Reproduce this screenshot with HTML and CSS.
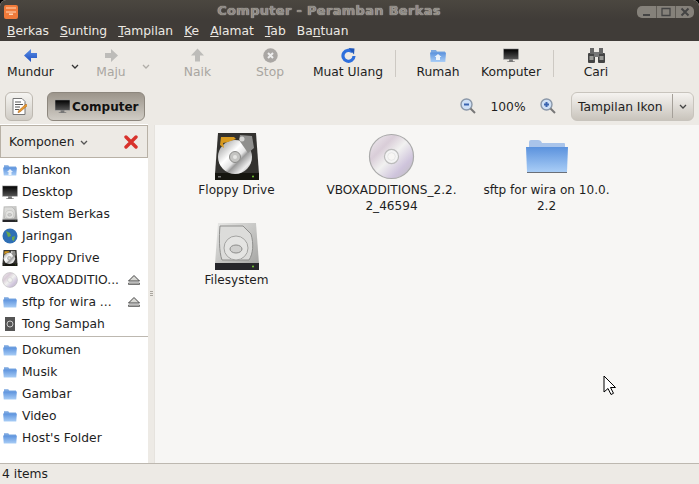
FILE: index.html
```html
<!DOCTYPE html>
<html lang="id">
<head>
    <meta charset="UTF-8">
    <title>Computer - Peramban Berkas</title>
    <link rel="stylesheet" href="styles.css">
</head>
<body>
<svg class="defs" width="0" height="0">
    <defs>
        <linearGradient id="fold" x1="0" y1="0" x2="0" y2="1"><stop offset="0" stop-color="#5b92dd"/><stop offset="1" stop-color="#a9cdf6"/></linearGradient>
        <linearGradient id="screen" x1="0" y1="0" x2="0" y2="1"><stop offset="0" stop-color="#000"/><stop offset="1" stop-color="#555"/></linearGradient>
        <linearGradient id="hddsilver" x1="0" y1="0" x2="1" y2="1"><stop offset="0" stop-color="#e8e8e6"/><stop offset="1" stop-color="#a5a5a3"/></linearGradient>
        <linearGradient id="platter" x1="0" y1="0" x2="1" y2="1"><stop offset="0" stop-color="#8a8a8a"/><stop offset=".4" stop-color="#fff"/><stop offset=".55" stop-color="#e4e4e4"/><stop offset=".62" stop-color="#9a9a9a"/><stop offset=".8" stop-color="#eee"/><stop offset="1" stop-color="#777"/></linearGradient>
        <linearGradient id="cd" x1="0" y1="0" x2="1" y2="1"><stop offset="0" stop-color="#f2f0f2"/><stop offset=".3" stop-color="#d9cdd8"/><stop offset=".5" stop-color="#f1f1f0"/><stop offset=".75" stop-color="#cfc4dc"/><stop offset="1" stop-color="#bbb"/></linearGradient>
        <linearGradient id="backblue" x1="0" y1="0" x2="0" y2="1"><stop offset="0" stop-color="#5a8fe6"/><stop offset="1" stop-color="#1f4fc0"/></linearGradient>
        <symbol id="folder" viewBox="0 0 16 14">
            <path d="M1 1.500h5l1 1.500h8v2H1z" fill="#7ba7e0"/>
            <path d="M0 4h16l-.7 9.500H.7z" fill="url(#fold)"/>
        </symbol>
        <symbol id="folder-large" viewBox="0 0 42 33">
            <path d="M3 2q0-2 2-2h7q3 0 4 3h22q1 0 1 1v4H3z" fill="#a9c4ea"/>
            <path d="M0 7h42l-1 25H1z" fill="url(#fold)"/>
            <path d="M1 32h40v1H1z" fill="#6a6f78"/>
        </symbol>
        <symbol id="disk" viewBox="0 0 16 16">
            <circle cx="8" cy="8" r="7.500" fill="url(#cd)" stroke="#aaa" stroke-width=".4"/>
            <circle cx="8" cy="8" r="2.400" fill="#f4f4f4" stroke="#bbb" stroke-width=".4"/>
            <circle cx="8" cy="8" r="1.300" fill="#f7f6f4" stroke="#ddd" stroke-width=".2"/>
        </symbol>
        <symbol id="eject" viewBox="0 0 12 10">
            <path d="M6 .5 11.500 6h-11z" fill="#d8d8d4" stroke="#444"/>
            <path d="M.5 8h11v1.500H.5z" fill="#d8d8d4" stroke="#444" stroke-width=".7"/>
        </symbol>
        <symbol id="monitor" viewBox="0 0 16 16">
            <rect x="0" y="1" width="16" height="11" fill="url(#screen)" stroke="#aaa" stroke-width=".6"/>
            <path d="M6 12h4v2h2v1H4v-1h2z" fill="#777"/>
        </symbol>
        <symbol id="chevron" viewBox="0 0 8 5">
            <path d="M1 1l3 3 3-3" fill="none" stroke="currentColor" stroke-width="1.300"/>
        </symbol>
        <symbol id="hdd-dark" viewBox="0 0 44 47">
            <path d="M3 0h38l3 41H0z" fill="#33322f"/>
            <rect x="0" y="40" width="44" height="7" fill="#15150f"/>
            <circle cx="20" cy="24" r="17" fill="url(#platter)"/>
            <circle cx="20" cy="24" r="5.500" fill="#c4c4c2" stroke="#8c8c8a"/>
            <circle cx="20" cy="24" r="2" fill="#e6e6e4"/>
            <path d="M6 4h13l2 2-8 3-5 1 1 5-4-3z" fill="#d89a1f"/>
            <path d="M25 2l12 1 2 12-6 5-9-13z" fill="#8f8f8d"/>
            <circle cx="27" cy="6" r="2.500" fill="#d5d5d3"/>
            <rect x="3" y="43" width="3" height="1.500" fill="#777"/>
            <circle cx="38" cy="43.500" r="1" fill="#7c3"/>
        </symbol>
        <symbol id="hdd-light" viewBox="0 0 44 47">
            <path d="M3 0h38l3 41H0z" fill="url(#hddsilver)"/>
            <rect x="0" y="40" width="44" height="7" fill="#26262a"/>
            <path d="M5 3h23l8 8c3 10 2 20-2 26H7c-3-8-3-24-2-34z" fill="#dcdcda" stroke="#8f8f8d"/>
            <circle cx="21" cy="25" r="12" fill="#e4e4e2" stroke="#a3a3a1"/>
            <ellipse cx="21" cy="26" rx="6" ry="4" fill="#cfcfcd" stroke="#8c8c8a"/>
            <circle cx="38" cy="43.500" r="1" fill="#7c3"/>
        </symbol>
    </defs>
</svg>

<div class="window">
    <div class="titlebar">
        <svg class="app-icon" width="14" height="14" viewBox="0 0 14 14"><rect width="14" height="14" rx="2" fill="#ef7a3a"/><path d="M2 3h10M2 7h10" stroke="#ffd5b5"/><rect x="5" y="8.500" width="4" height="1.500" fill="#ffd5b5"/></svg>
        <span class="title">Computer - Peramban Berkas</span>
        <div class="win-btns">
            <span class="win-btn"><svg width="10" height="10" viewBox="0 0 10 10"><path d="M1 8h7" stroke="#444" stroke-width="2"/></svg></span>
            <span class="win-btn"><svg width="10" height="10" viewBox="0 0 10 10"><path d="M1 1.500h8v7H1z" fill="none" stroke="#444" stroke-width="1.300"/></svg></span>
            <span class="win-btn"><svg width="10" height="10" viewBox="0 0 10 10"><path d="M1.500 1.500l7 7m0-7l-7 7" stroke="#444" stroke-width="2"/></svg></span>
        </div>
    </div>

    <div class="menubar">
        <span><u>B</u>erkas</span>
        <span><u>S</u>unting</span>
        <span><u>T</u>ampilan</span>
        <span><u>K</u>e</span>
        <span><u>A</u>lamat</span>
        <span><u>T</u>ab</span>
        <span>Ba<u>n</u>tuan</span>
    </div>

    <div class="toolbar">
        <div class="tool w-mundur">
            <svg width="14" height="13" viewBox="0 0 14 13"><path d="M7 0v4h6v5H7v4L0 6.500z" fill="url(#backblue)"/></svg>
            <span>Mundur</span>
        </div>
        <svg class="tool-arrow" width="8" height="5"><use href="#chevron"/></svg>
        <div class="tool w-maju off">
            <svg width="14" height="13" viewBox="0 0 14 13"><path d="M7 0v4H1v5h6v4l7-6.500z" fill="#bdbcb9"/></svg>
            <span>Maju</span>
        </div>
        <svg class="tool-arrow off" width="8" height="5"><use href="#chevron"/></svg>
        <div class="tool w-naik off">
            <svg width="13" height="14" viewBox="0 0 13 14"><path d="M6.500 0 13 7H9v6H4V7H0z" fill="#bdbcb9"/></svg>
            <span>Naik</span>
        </div>
        <div class="tool w-stop off">
            <svg width="15" height="15" viewBox="0 0 15 15"><circle cx="7.500" cy="7.500" r="7.200" fill="#aaa7a4"/><path d="M5 5l5 5m0-5l-5 5" stroke="#eee" stroke-width="2"/></svg>
            <span>Stop</span>
        </div>
        <div class="tool w-muat">
            <svg width="15" height="15" viewBox="0 0 15 15"><path d="M11.500 4A5.500 5.500 0 1 0 13 8" fill="none" stroke="#2e6fdc" stroke-width="3.200"/><path d="M7.500 0l6 .5-.5 6z" fill="#1f56b8"/></svg>
            <span>Muat Ulang</span>
        </div>
        <div class="sep"></div>
        <div class="tool w-rumah">
            <svg width="16" height="14"><use href="#folder"/><path d="M8 6 4.500 9H6v3h4V9h1.500z" fill="#fff" opacity=".85"/></svg>
            <span>Rumah</span>
        </div>
        <div class="tool w-komputer">
            <svg width="16" height="15"><use href="#monitor"/></svg>
            <span>Komputer</span>
        </div>
        <div class="sep sep-wide"></div>
        <div class="tool w-cari">
            <svg width="17" height="15" viewBox="0 0 17 15"><rect x="0" y="5" width="7" height="10" rx="1" fill="#444"/><rect x="10" y="5" width="7" height="10" rx="1" fill="#444"/><rect x="2" y="0" width="4" height="6" fill="#666"/><rect x="11" y="0" width="4" height="6" fill="#666"/><rect x="6" y="4" width="5" height="5" fill="#777"/><rect x="1.500" y="8" width="4" height="4" fill="#9a9a96"/><rect x="11.500" y="8" width="4" height="4" fill="#9a9a96"/></svg>
            <span>Cari</span>
        </div>
    </div>

    <div class="locbar">
        <span class="edit-btn">
            <svg width="15" height="17" viewBox="0 0 15 17"><path d="M1 .5h9l3 3v13H1z" fill="#fff" stroke="#777"/><path d="M3 4h6M3 6.500h8M3 9h5M3 11.500h4" stroke="#555"/><path d="M14 6l1.500 1.500L8 14l-2 .7.500-2z" fill="#e89a2c" stroke="#a5591a" stroke-width=".5"/></svg>
        </span>
        <span class="path-btn">
            <svg width="15" height="15"><use href="#monitor"/></svg>
            <b>Computer</b>
        </span>
        <div class="zoom">
            <svg width="16" height="16" viewBox="0 0 16 16"><circle cx="6.500" cy="6.500" r="5.500" fill="#cfe0f5" stroke="#8a97a8" stroke-width="1.400"/><path d="M4 6.500h5" stroke="#3a64b0" stroke-width="2"/><path d="M10.500 10.500 15 15" stroke="#777" stroke-width="2"/></svg>
            <span class="pct">100%</span>
            <svg width="16" height="16" viewBox="0 0 16 16"><circle cx="6.500" cy="6.500" r="5.500" fill="#cfe0f5" stroke="#8a97a8" stroke-width="1.400"/><path d="M4 6.500h5M6.500 4v5" stroke="#3a64b0" stroke-width="2"/><path d="M10.500 10.500 15 15" stroke="#777" stroke-width="2"/></svg>
        </div>
        <div class="view-combo">
            <span class="view-label">Tampilan Ikon</span>
            <span class="view-arrow"><svg width="8" height="5"><use href="#chevron"/></svg></span>
        </div>
    </div>

    <div class="content">
        <aside class="sidebar">
            <div class="side-head">
                <span class="side-title">Komponen <svg width="8" height="5"><use href="#chevron"/></svg></span>
                <svg width="14" height="14" viewBox="0 0 14 14"><path d="M2 2l10 10m0-10L2 12" stroke="#d8322c" stroke-width="3.400" stroke-linecap="round"/></svg>
            </div>
            <ul class="places">
                <li><svg width="16" height="12"><use href="#folder"/><path d="M8 5 5 8h1.500v3h3V8H11z" fill="#fff" opacity=".85"/></svg>blankon</li>
                <li><svg width="16" height="15"><use href="#monitor"/></svg>Desktop</li>
                <li><svg width="16" height="16"><use href="#hdd-light"/></svg>Sistem Berkas</li>
                <li><svg width="16" height="16" viewBox="0 0 16 16"><circle cx="8" cy="8" r="7.500" fill="#2f6fb5"/><path d="M4 3l4 2 1 3-3 1zM10 9l3-1-1 5-2-1z" fill="#6aa84f"/></svg>Jaringan</li>
                <li><svg width="16" height="16"><use href="#hdd-dark"/></svg>Floppy Drive</li>
                <li><svg width="16" height="16"><use href="#disk"/></svg><span class="grow">VBOXADDITIO...</span><svg class="eject" width="12" height="10"><use href="#eject"/></svg></li>
                <li><svg width="16" height="12"><use href="#folder"/></svg><span class="grow">sftp for wira ...</span><svg class="eject" width="12" height="10"><use href="#eject"/></svg></li>
                <li><svg width="16" height="16" viewBox="0 0 16 16"><path d="M3 1h10v14H3z" fill="#555"/><circle cx="8" cy="8" r="3" fill="none" stroke="#ccc"/></svg>Tong Sampah</li>
            </ul>
            <ul class="places bookmarks">
                <li><svg width="16" height="12"><use href="#folder"/></svg>Dokumen</li>
                <li><svg width="16" height="12"><use href="#folder"/></svg>Musik</li>
                <li><svg width="16" height="12"><use href="#folder"/></svg>Gambar</li>
                <li><svg width="16" height="12"><use href="#folder"/></svg>Video</li>
                <li><svg width="16" height="12"><use href="#folder"/></svg>Host's Folder</li>
            </ul>
        </aside>
        <div class="handle"><span></span><span></span><span></span></div>
        <main class="icons">
            <div class="file">
                <svg width="44" height="47"><use href="#hdd-dark"/></svg>
                <span>Floppy Drive</span>
            </div>
            <div class="file">
                <svg width="47" height="47"><use href="#disk"/></svg>
                <span>VBOXADDITIONS_2.2.<br>2_46594</span>
            </div>
            <div class="file">
                <svg width="42" height="47"><use href="#folder-large"/></svg>
                <span>sftp for wira on 10.0.<br>2.2</span>
            </div>
            <div class="file">
                <svg width="44" height="47"><use href="#hdd-light"/></svg>
                <span>Filesystem</span>
            </div>
        </main>
    </div>

    <div class="statusbar">4 items</div>

    <svg class="cursor" width="14" height="21" viewBox="0 0 14 21"><path d="M1 1v16l4-3.500 3 6 2.500-1.200-3-5.800H12.500z" fill="#fff" stroke="#000"/></svg>
</div>
</body>
</html>
```

FILE: styles.css
```css
* {
    box-sizing: border-box;
}
html, body {
    margin: 0;
    height: 100%;
    overflow: hidden;
}
body {
    font-family: "DejaVu Sans", sans-serif;
    font-size: 12.3px;
    color: #1e1e1e;
    background-color: #000;
}
.defs {
    position: absolute;
}
.window {
    position: relative;
    width: 699px;
    height: 484px;
    display: flex;
    flex-direction: column;
    background-color: #edeae5;
    border-radius: 6px 6px 0 0;
    overflow: hidden;
}

.titlebar {
    height: 19px;
    flex: none;
    display: flex;
    align-items: center;
    padding: 0 5px 0 4px;
    background: linear-gradient(#4b4740, #403c38);
}
.app-icon {
    margin-top: 5px;
}
.title {
    flex: 1;
    text-align: center;
    font-weight: bold;
    font-size: 13px;
    letter-spacing: .3px;
    color: #8e8a82;
    text-shadow: 0 0 1px #eee;
    padding-left: 3px;
    margin-top: 2px;
    white-space: nowrap;
}
.win-btns {
    display: flex;
    height: 12px;
    margin-top: 5px;
    border-radius: 5px;
    overflow: hidden;
    background-color: #85817a;
}
.win-btn {
    width: 19px;
    display: flex;
    align-items: center;
    justify-content: center;
    border-left: 1px solid #5f5b55;
}
.win-btn:first-child {
    border-left: 0;
}

.menubar {
    height: 22px;
    flex: none;
    display: flex;
    align-items: center;
    gap: 11px;
    padding: 2px 0 0 7px;
    background-color: #403c38;
    color: #ece9e3;
}

.toolbar {
    height: 47px;
    flex: none;
    display: flex;
    align-items: flex-start;
    padding-top: 7px;
}
.tool {
    display: flex;
    flex-direction: column;
    align-items: center;
    gap: 2px;
    flex: none;
}
.tool svg {
    height: 15px;
}
.tool span {
    white-space: nowrap;
}
.tool.off {
    color: #a9a6a1;
}
.tool-arrow {
    flex: none;
    margin: 16px 0 0 10px;
    color: #333;
}
.tool-arrow.off {
    margin-left: 0;
    color: #b0ada8;
}
.w-mundur { width: 61px; }
.w-maju { width: 62px; margin-left: 1px; }
.w-naik { width: 73px; margin-left: 11px; }
.w-stop { width: 72px; }
.w-muat { width: 84px; }
.w-rumah { width: 84px; }
.w-komputer { width: 62px; }
.w-cari { width: 84px; }
.sep {
    width: 1px;
    height: 27px;
    margin: 2px 0 0 5px;
    flex: none;
    background-color: #cdc9c3;
}
.sep-wide {
    margin-left: 11px;
}

.locbar {
    height: 36px;
    flex: none;
    display: flex;
    align-items: center;
    padding: 0 5px;
}
.edit-btn {
    width: 28px;
    height: 29px;
    display: flex;
    align-items: center;
    justify-content: center;
    border: 1px solid #bdb8b0;
    border-radius: 6px;
    background: linear-gradient(#f6f5f2, #cfcbc4);
}
.path-btn {
    display: flex;
    align-items: center;
    gap: 2px;
    height: 29px;
    width: 98px;
    margin-left: 14px;
    padding-left: 7px;
    border: 1px solid #8d877e;
    border-radius: 6px;
    color: #111;
    background: linear-gradient(#9c958b, #d0ccc5);
}
.path-btn b {
    font-size: 12px;
    padding-top: 1px;
}
.zoom {
    display: flex;
    align-items: center;
    margin-left: auto;
    margin-right: 15px;
}
.pct {
    width: 64px;
    text-align: center;
    padding-top: 1px;
}
.view-combo {
    width: 123px;
    height: 29px;
    display: flex;
    align-items: center;
    border: 1px solid #c8c4bd;
    border-radius: 6px;
    background: linear-gradient(#f5f3f0, #c9c4bc);
}
.view-label {
    flex: 1;
    padding: 1px 0 0 6px;
    white-space: nowrap;
}
.view-arrow {
    width: 21px;
    height: 24px;
    display: flex;
    align-items: center;
    justify-content: center;
    border-left: 1px solid #a5a099;
    color: #444;
}

.content {
    flex: 1;
    min-height: 0;
    display: flex;
}
.sidebar {
    width: 148px;
    flex: none;
    background-color: #fff;
    display: flex;
    flex-direction: column;
}
.side-head {
    height: 33px;
    flex: none;
    display: flex;
    align-items: center;
    justify-content: space-between;
    padding: 0 9px 0 8px;
    margin-top: 1px;
    border: 1px solid #b8b1a6;
    background-color: #edeae5;
}
.side-title svg {
    color: #555;
    margin-left: 2px;
    vertical-align: 1px;
}
.places {
    list-style: none;
    margin: 0;
    padding: 1px 0 1px 2px;
    border-bottom: 1px solid #bdb8b0;
}
.bookmarks {
    border-bottom: 0;
    padding-top: 2px;
}
.places li {
    height: 22px;
    display: flex;
    align-items: center;
    gap: 4px;
    padding-right: 8px;
    white-space: nowrap;
}
.grow {
    flex: 1;
}
.handle {
    width: 6px;
    flex: none;
    display: flex;
    flex-direction: column;
    justify-content: center;
    gap: 1px;
    padding: 0 1px 0 2px;
}
.handle span {
    height: 1px;
    background-color: #aaa69f;
}
.icons {
    flex: 1;
    margin-top: 1px;
    background-color: #f7f6f4;
    display: grid;
    grid-template-columns: repeat(3, 155px) 1fr;
    grid-auto-rows: 90px;
    padding: 8px 0 0 4px;
    border-left: 1px solid #e6e3de;
}
.file {
    display: flex;
    flex-direction: column;
    align-items: center;
    text-align: center;
    font-size: 12.1px;
    line-height: 16px;
}
.file svg {
    flex: none;
    margin-bottom: 2px;
}
.file:nth-child(4) {
    grid-column: 1;
}

.statusbar {
    height: 21px;
    flex: none;
    display: flex;
    align-items: center;
    padding-left: 2px;
    border-top: 1px solid #bdb8b0;
}
.cursor {
    position: absolute;
    left: 603px;
    top: 375px;
}
```
